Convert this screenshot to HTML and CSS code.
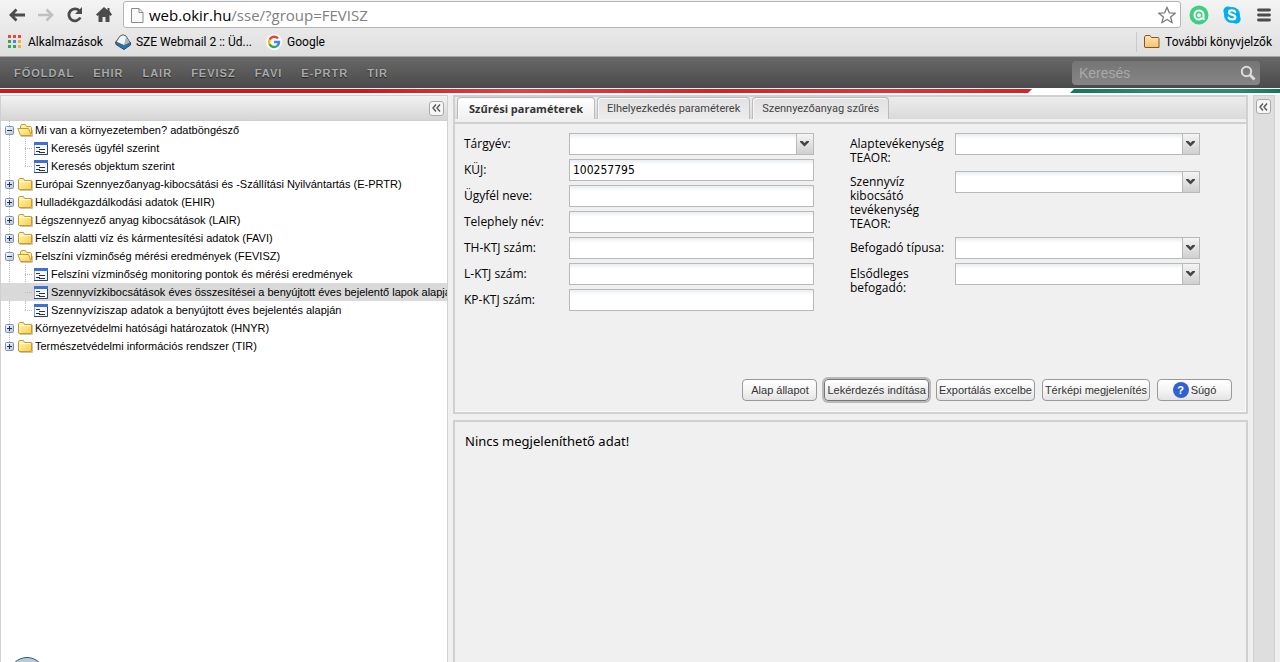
FILE: index.html
```html
<!DOCTYPE html>
<html lang="hu">
<head>
<meta charset="utf-8">
<title>OKIR – FEVISZ</title>
<link rel="stylesheet" href="styles.css">
</head>
<body>
<svg class="defs" aria-hidden="true">
  <defs>
    <linearGradient id="gold" x1="0" y1="0" x2="1" y2="1"><stop offset="0" stop-color="#fff9c0"/><stop offset="1" stop-color="#f5ce45"/></linearGradient>
    <linearGradient id="peach" x1="0" y1="0" x2="0" y2="1"><stop offset="0" stop-color="#ffe6b0"/><stop offset="1" stop-color="#f9c26c"/></linearGradient>
    <linearGradient id="box" x1="0" y1="0" x2="1" y2="1"><stop offset="0" stop-color="#fff"/><stop offset="1" stop-color="#b4c0d4"/></linearGradient>
  </defs>
  <symbol id="folder" viewBox="0 0 16 16"><path d="M3 14.500H15.500V5" fill="none" stroke="#c4c4c4"/><path d="M1.500 13V4L2.500 2.500H6.500L7.500 4.500H14.500V13.500H2Z" fill="url(#gold)" stroke="#c99a30"/><path d="M2.500 6V5.500H13.500" fill="none" stroke="#fffbe0"/></symbol>
  <symbol id="folder-open" viewBox="0 0 16 16"><path d="M4 14.500H15.500V8" fill="none" stroke="#c4c4c4"/><path d="M3.500 8V4L4.500 2.500H8.500L9.500 4.500H13.500L14.500 5.500V12" fill="#fdf0a0" stroke="#c99a30"/><path d="M.800 6.500H11.500L14.500 13.500H3.500Z" fill="url(#gold)" stroke="#c99a30"/></symbol>
  <symbol id="form" viewBox="0 0 16 16"><path d="M1.500 2.500H14.500V14.500H1.500Z" fill="#f4f8fd" stroke="#8fa6cc"/><path d="M1 2H15V5H1Z" fill="#3e70d6"/><path d="M14.500 5V14.500H1" fill="none" stroke="#27447c"/><path d="M3 7.500H7M6 9.500H12M3 11.500H7M6 12.500H12" stroke="#333"/></symbol>
  <symbol id="minus" viewBox="0 0 9 9"><rect x=".5" y=".5" width="8" height="8" rx="1" fill="url(#box)" stroke="#7c93b5"/><path d="M2 4.500H7" stroke="#1c315d"/></symbol>
  <symbol id="plus" viewBox="0 0 9 9"><rect x=".5" y=".5" width="8" height="8" rx="1" fill="url(#box)" stroke="#7c93b5"/><path d="M2 4.500H7M4.500 2V7" stroke="#1c315d"/></symbol>
  <symbol id="caret" viewBox="0 0 9 6"><path d="M0 0H2.500L4.500 2 6.500 0H9V1L4.500 5.500 0 1Z" fill="#444"/></symbol>
  <symbol id="collapse" viewBox="0 0 9 8"><path d="M4 .500 1 4 4 7.500M8 .500 5 4 8 7.500" fill="none" stroke="#555" stroke-width="1.400"/></symbol>
</svg>

<div class="browser">
  <div class="toolbar">
    <button class="tool" aria-label="Vissza"><svg width="18" height="16" viewBox="0 0 18 16"><path d="M17 8H3M8.500 2.500 3 8 8.500 13.500" fill="none" stroke="#4b4b4b" stroke-width="2.800"/></svg></button>
    <button class="tool" aria-label="Előre"><svg width="18" height="16" viewBox="0 0 18 16"><path d="M1 8H15M9.500 2.500 15 8 9.500 13.500" fill="none" stroke="#c0c0c0" stroke-width="2.600"/></svg></button>
    <button class="tool" aria-label="Frissítés"><svg width="18" height="18" viewBox="0 0 18 18"><path d="M14.300 11.500A6 6 0 1 1 13.300 4.800" fill="none" stroke="#4b4b4b" stroke-width="2.800"/><path d="M16 1V8H9Z" fill="#4b4b4b"/></svg></button>
    <button class="tool" aria-label="Kezdőlap"><svg width="16" height="16" viewBox="0 0 16 16"><path d="M11.500 1H13.500V4L16 7.500 14.500 9 13.500 8V15H9.500V10H6.500V15H2.500V8L1.500 9 0 7.500 8 0 11.500 3Z" fill="#4b4b4b"/></svg></button>
    <div class="address">
      <svg width="13" height="16" viewBox="0 0 13 16"><path d="M.500 1.500H8L12 5.500V15.500H.500ZM8 1.500V5.500H12" fill="#fafafa" stroke="#8a8a8a"/></svg>
      <div class="url" role="textbox" aria-label="Cím">web.okir.hu<span class="path">/sse/?group=FEVISZ</span></div>
      <svg width="20" height="18" viewBox="0 0 20 18"><path d="M10 1.200 12.300 6.800 18.300 7.200 13.600 11 15.200 16.800 10 13.500 4.800 16.800 6.400 11 1.700 7.200 7.700 6.800Z" fill="#fff" stroke="#7a7a7a" stroke-width="1.300" stroke-linejoin="round"/></svg>
    </div>
    <button class="tool ext" aria-label="Avast"><svg width="20" height="20" viewBox="0 0 20 20"><circle cx="10" cy="10" r="9.500" fill="#3fcf83"/><path d="M14.500 15V10A4.500 4.500 0 1 0 10 14.500Q12.500 14.500 12.500 12.500" fill="none" stroke="#fff" stroke-width="2"/><circle cx="10" cy="10.300" r="2" fill="#fff"/></svg></button>
    <button class="tool ext" aria-label="Skype"><svg width="18" height="18" viewBox="0 0 18 18"><circle cx="9" cy="9" r="8" fill="#00aff0"/><circle cx="5" cy="5" r="4.600" fill="#00aff0"/><circle cx="13" cy="13" r="4.700" fill="#00aff0"/><path d="M12.300 6C11 3.800 6 3.700 6 6.500 6 9.300 12.300 8 12.300 11.300 12.300 14.200 6.700 14 5.500 11.700" fill="none" stroke="#fff" stroke-width="2.200" stroke-linecap="round"/></svg></button>
    <button class="tool menu" aria-label="Menü"><svg width="14" height="14" viewBox="0 0 14 14"><path d="M1.500 2H12.500M1.500 7H12.500M1.500 12H12.500" stroke="#4b4b4b" stroke-width="2.800" stroke-linecap="round"/></svg></button>
  </div>
  <div class="bookmarks">
    <a class="bookmark apps" href="#"><svg width="14" height="14" viewBox="0 0 14 14"><path d="M0 0H3V3H0ZM5 0H8V3H5ZM10 0H13V3H10Z" fill="#e8453c"/><path d="M0 5H3V8H0ZM0 10H3V13H0ZM5 10H8V13H5Z" fill="#38a456"/><path d="M5 5H8V8H5Z" fill="#4285f4"/><path d="M10 5H13V8H10ZM10 10H13V13H10Z" fill="#f9b02c"/></svg>Alkalmazások</a>
    <a class="bookmark webmail" href="#"><svg width="16" height="16" viewBox="0 0 16 16"><path d="M.500 8 8 1.500 15.500 8.500V11L9 15.500 1 10.500Z" fill="#1e78b4" stroke="#34495a"/><path d="M1 8 5 2Q8-.500 11 2L15 8.500 9 11.500Z" fill="#f1f4f6" stroke="#4c5e6b"/><path d="M9 11 11 3 14.500 8.500Z" fill="#a9b8c2"/></svg>SZE Webmail 2 :: Üd...</a>
    <a class="bookmark" href="#"><svg width="16" height="16" viewBox="0 0 16 16"><circle cx="8" cy="8" r="8" fill="#fff"/><g fill="none" stroke-width="2.500"><path d="M12 4.500A5 5 0 0 0 3.600 5.700" stroke="#ea4335"/><path d="M3.700 5.500A5 5 0 0 0 3.700 10.500" stroke="#fbbc05"/><path d="M3.600 10.300A5 5 0 0 0 11.200 11.900" stroke="#34a853"/><path d="M11 12A5 5 0 0 0 13 8H8" stroke="#4285f4"/></g></svg>Google</a>
    <a class="bookmark more" href="#"><svg width="16" height="14" viewBox="0 0 16 14"><path d="M.500 12V2L1.500.500H6L7.500 2.500H14.500L15 3.500V12.500H1Z" fill="url(#peach)" stroke="#80572c"/></svg>További könyvjelzők</a>
  </div>
</div>

<header class="site">
  <nav class="nav">
    <a href="#">FŐOLDAL</a><a href="#">EHIR</a><a href="#">LAIR</a><a href="#">FEVISZ</a><a href="#">FAVI</a><a href="#">E-PRTR</a><a href="#">TIR</a>
  </nav>
  <form class="search">
    <input type="search" placeholder="Keresés" aria-label="Keresés">
    <button type="button" aria-label="Keresés indítása"><svg width="16" height="16" viewBox="0 0 16 16"><circle cx="6.500" cy="6.500" r="4.700" fill="none" stroke="#ddd" stroke-width="2"/><path d="M10 10 14.500 14.500" stroke="#ddd" stroke-width="2.800"/></svg></button>
  </form>
</header>
<div class="stripe"><div class="red"></div><div class="green"></div></div>

<main class="app">
  <aside class="side">
    <div class="side-head"><button class="fold" aria-label="Panel összecsukása"><svg width="9" height="8"><use href="#collapse"/></svg></button></div>
    <ul class="tree">
      <li><a class="node" href="#"><svg class="knob"><use href="#minus"/></svg><svg class="icon"><use href="#folder-open"/></svg>Mi van a környezetemben? adatböngésző</a>
        <ul>
          <li><a class="leaf" href="#"><svg class="icon"><use href="#form"/></svg>Keresés ügyfél szerint</a></li>
          <li><a class="leaf" href="#"><svg class="icon"><use href="#form"/></svg>Keresés objektum szerint</a></li>
        </ul></li>
      <li><a class="node" href="#"><svg class="knob"><use href="#plus"/></svg><svg class="icon"><use href="#folder"/></svg>Európai Szennyezőanyag-kibocsátási és -Szállítási Nyilvántartás (E-PRTR)</a></li>
      <li><a class="node" href="#"><svg class="knob"><use href="#plus"/></svg><svg class="icon"><use href="#folder"/></svg>Hulladékgazdálkodási adatok (EHIR)</a></li>
      <li><a class="node" href="#"><svg class="knob"><use href="#plus"/></svg><svg class="icon"><use href="#folder"/></svg>Légszennyező anyag kibocsátások (LAIR)</a></li>
      <li><a class="node" href="#"><svg class="knob"><use href="#plus"/></svg><svg class="icon"><use href="#folder"/></svg>Felszín alatti víz és kármentesítési adatok (FAVI)</a></li>
      <li><a class="node" href="#"><svg class="knob"><use href="#minus"/></svg><svg class="icon"><use href="#folder-open"/></svg>Felszíni vízminőség mérési eredmények (FEVISZ)</a>
        <ul>
          <li><a class="leaf" href="#"><svg class="icon"><use href="#form"/></svg>Felszíni vízminőség monitoring pontok és mérési eredmények</a></li>
          <li><a class="leaf selected" href="#"><svg class="icon"><use href="#form"/></svg>Szennyvízkibocsátások éves összesítései a benyújtott éves bejelentő lapok alapján</a></li>
          <li><a class="leaf" href="#"><svg class="icon"><use href="#form"/></svg>Szennyvíziszap adatok a benyújtott éves bejelentés alapján</a></li>
        </ul></li>
      <li><a class="node" href="#"><svg class="knob"><use href="#plus"/></svg><svg class="icon"><use href="#folder"/></svg>Környezetvédelmi hatósági határozatok (HNYR)</a></li>
      <li><a class="node" href="#"><svg class="knob"><use href="#plus"/></svg><svg class="icon"><use href="#folder"/></svg>Természetvédelmi információs rendszer (TIR)</a></li>
    </ul>
  </aside>

  <div class="center">
    <section class="panel filter">
      <div class="tabs" role="tablist">
        <button class="tab active" role="tab" aria-selected="true">Szűrési paraméterek</button>
        <button class="tab" role="tab">Elhelyezkedés paraméterek</button>
        <button class="tab" role="tab">Szennyezőanyag szűrés</button>
      </div>
      <form class="filter-body">
        <div class="columns">
          <div class="fields">
            <div class="row"><label for="year">Tárgyév:</label><span class="combo"><select id="year"><option></option></select><svg><use href="#caret"/></svg></span></div>
            <div class="row"><label for="kuj">KÜJ:</label><input class="text" id="kuj" type="text" value="100257795"></div>
            <div class="row"><label for="client">Ügyfél neve:</label><input class="text" id="client" type="text"></div>
            <div class="row"><label for="site">Telephely név:</label><input class="text" id="site" type="text"></div>
            <div class="row"><label for="thktj">TH-KTJ szám:</label><input class="text" id="thktj" type="text"></div>
            <div class="row"><label for="lktj">L-KTJ szám:</label><input class="text" id="lktj" type="text"></div>
            <div class="row"><label for="kpktj">KP-KTJ szám:</label><input class="text" id="kpktj" type="text"></div>
          </div>
          <div class="fields">
            <div class="row"><label for="teaor">Alaptevékenység TEAOR:</label><span class="combo"><select id="teaor"><option></option></select><svg><use href="#caret"/></svg></span></div>
            <div class="row"><label for="sewage">Szennyvíz kibocsátó tevékenység TEAOR:</label><span class="combo"><select id="sewage"><option></option></select><svg><use href="#caret"/></svg></span></div>
            <div class="row"><label for="rectype">Befogadó típusa:</label><span class="combo"><select id="rectype"><option></option></select><svg><use href="#caret"/></svg></span></div>
            <div class="row"><label for="receiver">Elsődleges befogadó:</label><span class="combo"><select id="receiver"><option></option></select><svg><use href="#caret"/></svg></span></div>
          </div>
        </div>
        <div class="actions">
          <button type="button" class="btn">Alap állapot</button>
          <button type="button" class="btn focus">Lekérdezés indítása</button>
          <button type="button" class="btn">Exportálás excelbe</button>
          <button type="button" class="btn">Térképi megjelenítés</button>
          <button type="button" class="btn"><span class="help">?</span>Súgó</button>
        </div>
      </form>
    </section>
    <section class="panel results">Nincs megjeleníthető adat!</section>
  </div>

  <aside class="rail"><button class="fold" aria-label="Panel kinyitása"><svg width="9" height="8"><use href="#collapse"/></svg></button></aside>
</main>
<div class="orb"></div>
</body>
</html>
```
FILE: styles.css
```css
* { box-sizing: border-box; }
body {
  margin: 0;
  height: 100vh;
  display: flex;
  flex-direction: column;
  overflow: hidden;
  background: #f0f0f0;
  color: #000;
  font: 11px "Liberation Sans", Arial, sans-serif;
}
button, input, select { font: inherit; color: inherit; margin: 0; }
a { color: inherit; text-decoration: none; }
ul { list-style: none; margin: 0; padding: 0; }
svg { flex: none; display: block; }
.defs { position: absolute; width: 0; height: 0; }

/* Browser chrome */
.browser {
  flex: none;
  background: linear-gradient(#f4f4f4, #dedede);
  border-bottom: 1px solid #a5a5a5;
  font-family: "Open Sans", "Noto Sans", sans-serif;
}
.toolbar { display: flex; align-items: center; height: 29px; padding: 0 9px 0 8px; }
.tool {
  display: flex;
  justify-content: center;
  width: 18px;
  margin-right: 11px;
  padding: 0;
  border: 0;
  background: none;
}
.address {
  flex: 1;
  display: flex;
  align-items: center;
  gap: 5px;
  height: 27px;
  margin: 0 8px 0 -1px;
  padding: 0 3px 0 7px;
  background: #fff;
  border: 1px solid #b4b4b4;
  border-radius: 3px;
}
.url { flex: 1; font-size: 15px; line-height: 24px; }
.path { color: #808080; }
.ext { width: 20px; margin-right: 13px; }
.menu { width: 14px; margin: 0 0 0 2px; }
.bookmarks {
  display: flex;
  align-items: center;
  height: 27px;
  padding: 0 8px 2px;
  font: 12px Roboto, sans-serif;
}
.bookmark { display: flex; align-items: center; gap: 5px; margin-right: 14px; }
.apps { gap: 6px; margin-right: 12px; }
.more {
  margin: 0 0 0 auto;
  padding-left: 7px;
  line-height: 20px;
  border-left: 1px solid #c3ccd4;
}

/* Site header */
.site {
  flex: none;
  display: flex;
  align-items: center;
  justify-content: space-between;
  height: 31px;
  padding: 0 20px 0 14px;
  background: linear-gradient(#686868, #4a4a4a);
}
.nav { display: flex; gap: 19px; }
.nav a {
  color: #aaa;
  font-weight: bold;
  letter-spacing: 1px;
  text-shadow: 0 1px 1px #222;
}
.search {
  display: flex;
  align-items: center;
  width: 188px;
  height: 24px;
  padding: 0 4px 0 7px;
  border-radius: 4px;
  background: linear-gradient(#757575, #868686);
}
.search input {
  flex: 1;
  min-width: 0;
  padding: 0;
  border: 0;
  outline: 0;
  background: none;
  font-size: 14px;
}
.search input::placeholder { color: #aaa; opacity: 1; }
.search button { padding: 0; border: 0; background: none; }
.stripe {
  flex: none;
  display: flex;
  justify-content: space-between;
  height: 7px;
  padding: 1px 0 2px;
  background: #fff;
}
.red {
  width: calc(100% - 248px);
  background: linear-gradient(90deg, #d2151e 35%, #e24148 50%, #d7202a 70%, #e0333b 85%, #d7202a);
  clip-path: polygon(0 0, 100% 0, calc(100% - 4px) 100%, 0 100%);
}
.green {
  width: 210px;
  background: linear-gradient(90deg, #12775c, #2c8a72 40%, #2c8a72 80%, #12775c);
  clip-path: polygon(4px 0, 100% 0, 100% 100%, 0 100%);
}

/* Application frame */
.app { flex: 1; min-height: 0; display: flex; gap: 5px; padding-right: 5px; }
.side {
  flex: none;
  width: 448px;
  overflow: hidden;
  background: #fff;
  border: 1px solid #d0d0d0;
  border-bottom: 0;
}
.side-head {
  display: flex;
  align-items: center;
  justify-content: flex-end;
  height: 25px;
  padding-right: 3px;
  border-bottom: 1px solid #d0d0d0;
  background: linear-gradient(#f2f2f2, #d5d5d5);
}
.fold {
  display: flex;
  align-items: center;
  justify-content: center;
  width: 15px;
  height: 15px;
  padding: 0;
  background: #f6f6f6;
  border: 1px solid #aaa;
  border-radius: 3px;
}
.tree > li {
  background: repeating-linear-gradient(#bbb 0 1px, transparent 1px 2px) 8px 0 / 1px 100% no-repeat;
}
.tree > li:last-child { background-size: 1px 9px; }
.tree ul {
  background: repeating-linear-gradient(#bbb 0 1px, transparent 1px 2px) 24px 0 / 1px calc(100% - 9px) no-repeat;
}
.node, .leaf { display: flex; align-items: center; height: 18px; white-space: nowrap; }
.node { padding-left: 4px; }
.leaf {
  padding-left: 32px;
  background: repeating-linear-gradient(90deg, #bbb 0 1px, transparent 1px 2px) 24px 9px / 8px 1px no-repeat;
}
.leaf.selected { background-color: #d9d9d9; }
.knob { width: 9px; height: 9px; margin-right: 3px; }
.icon { width: 16px; height: 16px; margin-right: 2px; }

.center { flex: 1; min-width: 0; display: flex; flex-direction: column; gap: 6px; }
.panel { border: 2px solid #d0d0d0; }
.filter { flex: none; }
.tabs {
  display: flex;
  align-items: flex-end;
  gap: 2px;
  height: 27px;
  padding: 0 2px 3px;
  border-bottom: 2px solid #d0d0d0;
  background: linear-gradient(#ececec, #dadada 90%, #f0f0f0 90%);
}
.tab {
  height: 22px;
  padding: 0 9px;
  border: 1px solid #bbb;
  border-bottom: 0;
  border-radius: 4px 4px 0 0;
  background: linear-gradient(#e2e2e2, #ececec);
  box-shadow: inset 1px 1px #f8f8f8;
  color: #444;
  font: 11px Roboto, sans-serif;
  line-height: 20px;
}
.tab.active {
  min-width: 138px;
  background: linear-gradient(#fff, #f0f0f0);
  color: #333;
  font-family: "Open Sans", "Noto Sans", sans-serif;
  font-weight: bold;
}
.filter-body {
  display: flex;
  flex-direction: column;
  justify-content: space-between;
  min-height: 288px;
  padding: 9px 13px 10px 9px;
  border: solid #fafafa;
  border-width: 0 1px 1px 0;
}
.columns { display: flex; gap: 36px; font: 12px "Open Sans", "Noto Sans", sans-serif; }
.fields { display: flex; flex-direction: column; gap: 4px; }
.row { display: flex; align-items: flex-start; gap: 5px; }
.row label { width: 100px; padding: 4px 0 2px; line-height: 14px; }
.text, .combo { width: 245px; height: 22px; }
.text, .combo select {
  padding: 0 3px;
  border: 1px solid #b9b9b9;
  border-radius: 0;
  outline: 0;
  background: linear-gradient(#e9eef0, #fff 5px);
}
.text { font-family: "DejaVu Sans Condensed", "DejaVu Sans", sans-serif; }
.combo { display: grid; }
.combo select, .combo svg { grid-area: 1 / 1; }
.combo select { appearance: none; width: 100%; height: 22px; }
.combo svg {
  justify-self: end;
  width: 18px;
  height: 22px;
  padding: 7px 4px 7px 3px;
  border: 1px solid #b9b9b9;
  background: linear-gradient(#f5f5f5, #cfcfcf);
  pointer-events: none;
}
.actions { display: flex; justify-content: flex-end; gap: 7px; }
.btn {
  display: flex;
  align-items: center;
  justify-content: center;
  gap: 2px;
  min-width: 75px;
  height: 22px;
  padding: 0 2px;
  border: 1px solid #999;
  border-radius: 4px;
  background: linear-gradient(#fff, #f5f5f5 50%, #e3e3e3);
  color: #333;
  white-space: nowrap;
}
.btn.focus {
  border-color: #777;
  box-shadow: 0 0 0 2px #b9b9b9;
  background: linear-gradient(#fff, #e0e0e0);
}
.help {
  width: 16px;
  border-radius: 50%;
  background: #2f62d0;
  color: #fff;
  font-weight: bold;
  line-height: 16px;
}
.results { flex: 1; border-bottom: 0; padding: 10px; font: 13px "Noto Sans", sans-serif; }
.rail {
  flex: none;
  width: 22px;
  padding: 3px 2px;
  background: #dedede;
  border: 1px solid #d0d0d0;
  border-bottom: 0;
}

/* Start button peeking over the bottom edge */
.orb {
  position: absolute;
  left: 9px;
  bottom: -31px;
  width: 36px;
  height: 36px;
  border: 1px solid #35566f;
  border-radius: 50%;
  background: #b5cbdb;
}
```
